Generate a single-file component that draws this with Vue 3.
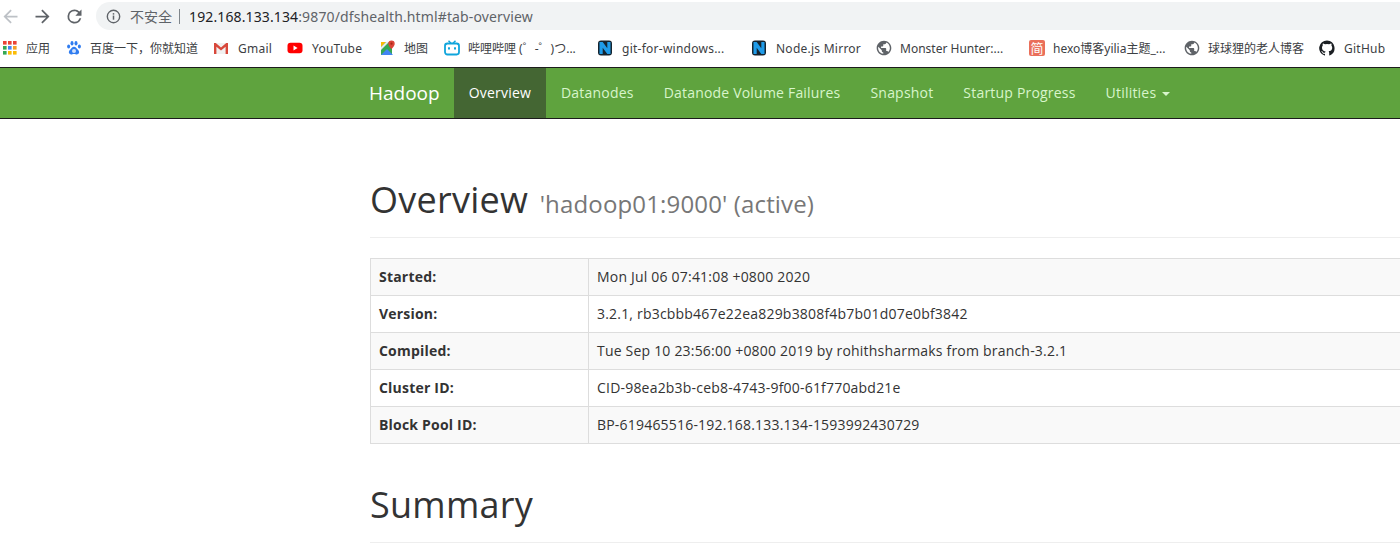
<template>
  <div class="page">
    <div class="toolbar">
      <svg class="nav-btn" viewBox="0 0 24 24"><path d="M20 11H7.8l5.6-5.6L12 4l-8 8 8 8 1.4-1.4L7.8 13H20z" fill="#bdc1c6" /></svg>
      <svg class="nav-btn" viewBox="0 0 24 24"><path d="M4 11h12.2l-5.6-5.6L12 4l8 8-8 8-1.4-1.4 5.6-5.6H4z" fill="#5f6368" /></svg>
      <svg class="nav-btn" viewBox="0 0 24 24"><path d="M17.65 6.35A7.96 7.96 0 0 0 12 4a8 8 0 1 0 7.73 10h-2.08A6 6 0 1 1 12 6c1.66 0 3.14.69 4.22 1.78L13 11h7V4z" fill="#5f6368" /></svg>
      <div class="omnibox">
        <svg class="info" viewBox="0 0 16 16">
          <circle cx="8" cy="8" r="6.6" fill="none" stroke="#5f6368" stroke-width="1.5" />
          <rect x="7.2" y="7" width="1.6" height="4.4" fill="#5f6368" />
          <rect x="7.2" y="4.4" width="1.6" height="1.6" fill="#5f6368" />
        </svg>
        <span class="insecure">不安全</span>
        <span class="divider"></span>
        <span class="url"><span class="host">192.168.133.134</span>:9870/dfshealth.html#tab-overview</span>
      </div>
    </div>

    <div class="bookmarks">
      <div v-for="b in bookmarks" :key="b.label" :class="['bookmark', { latin: b.latin }]">
        <svg class="bm-icon" viewBox="0 0 16 16">
          <template v-if="b.icon === 'apps'">
            <rect v-for="d in appDots" :key="d.x + '-' + d.y" :x="d.x" :y="d.y" width="3.6" height="3.6" :fill="d.c" />
          </template>
          <template v-else-if="b.icon === 'baidu'">
            <path d="M8 6.800c-1.800 0-2.600 1.800-3.900 3-1.100 1.100-1.500 2.200-1.100 3.300.4 1.100 1.600 1.500 2.800 1.300 1-.2 1.500-.4 2.200-.4s1.200.2 2.200.4c1.200.2 2.400-.2 2.800-1.300.4-1.100 0-2.200-1.100-3.300C10.600 8.600 9.800 6.800 8 6.800z" fill="#2f7cf0" />
            <ellipse cx="6" cy="3.200" rx="1.500" ry="2.200" fill="#2f7cf0" />
            <ellipse cx="10" cy="3.200" rx="1.500" ry="2.200" fill="#2f7cf0" />
            <ellipse cx="2.600" cy="6.600" rx="1.500" ry="2" fill="#2f7cf0" />
            <ellipse cx="13.400" cy="6.600" rx="1.500" ry="2" fill="#2f7cf0" />
            <circle cx="8" cy="11" r="2" fill="#cfe0fb" />
          </template>
          <template v-else-if="b.icon === 'gmail'">
            <path d="M1 3h14v11H1z" fill="#f1f1f1" />
            <path d="M1 14V3h1.800L8 7.600 13.200 3H15v11h-2.400V6.700L8 10.600 3.400 6.700V14z" fill="#d8483b" />
          </template>
          <template v-else-if="b.icon === 'youtube'">
            <rect x="0.500" y="2.800" width="15" height="10.400" rx="3" fill="#f00" />
            <path d="M6.500 5.600v4.800L10.600 8z" fill="#fff" />
          </template>
          <template v-else-if="b.icon === 'maps'">
            <path d="M1 2h11v13H1z" fill="#35a853" />
            <path d="M1 2h5L1 7z" fill="#fbbc05" />
            <path d="M1 15l6-6 6 6z" fill="#4285f4" />
            <path d="M1 7l5-5h3L1 10z" fill="#e8eaed" />
            <path d="M11.500 0.500a3.200 3.200 0 0 0-3.200 3.200c0 2.300 3.200 5.300 3.200 5.300s3.200-3 3.200-5.300a3.200 3.200 0 0 0-3.200-3.200z" fill="#db4437" />
            <circle cx="11.500" cy="3.700" r="1.100" fill="#a52714" />
          </template>
          <template v-else-if="b.icon === 'bili'">
            <path d="M4.500 0.800L7 3.200M11.500 0.800L9 3.200" stroke="#10a5dc" stroke-width="1.500" fill="none" />
            <rect x="1" y="3.500" width="14" height="11" rx="2.400" fill="none" stroke="#10a5dc" stroke-width="1.800" />
            <rect x="4" y="7.300" width="2" height="2.200" fill="#10a5dc" />
            <rect x="10" y="7.300" width="2" height="2.200" fill="#10a5dc" />
          </template>
          <template v-else-if="b.icon === 'node'">
            <rect x="1" y="0.500" width="14" height="15" rx="3" fill="#16242f" />
            <path d="M2.500 14V2h3.200l4.600 6.200V2h3.200v12h-3.200L5.700 7.800V14z" fill="#1f9be8" />
          </template>
          <template v-else-if="b.icon === 'globe'">
            <path transform="translate(-0.800 -0.800) scale(0.733)" d="M12 2C6.480 2 2 6.480 2 12s4.480 10 10 10 10-4.480 10-10S17.520 2 12 2zm-1 17.930c-3.950-.49-7-3.850-7-7.930 0-.62.08-1.210.21-1.790L9 15v1c0 1.100.9 2 2 2v1.930zm6.900-2.540c-.26-.81-1-1.390-1.900-1.390h-1v-3c0-.55-.45-1-1-1H8v-2h2c.55 0 1-.45 1-1V7h2c1.100 0 2-.9 2-2v-.41c2.930 1.190 5 4.060 5 7.410 0 2.080-.8 3.970-2.100 5.390z" fill="#5f6368" />
          </template>
          <template v-else-if="b.icon === 'jian'">
            <rect width="16" height="16" rx="2" fill="#ea6f5a" />
            <text x="8" y="13" text-anchor="middle" font-size="13" fill="#fff">简</text>
          </template>
          <template v-else>
            <path d="M8 .4a7.800 7.800 0 0 0-2.500 15.200c.4.100.5-.2.500-.4v-1.400c-2.200.5-2.600-1-2.600-1-.4-.9-.9-1.200-.9-1.200-.7-.5.100-.5.100-.5.800.100 1.200.8 1.200.8.700 1.200 1.900.9 2.300.7.100-.5.300-.9.500-1.100-1.700-.2-3.600-.9-3.600-3.900 0-.8.300-1.500.8-2.100-.1-.2-.4-1 .1-2.100 0 0 .7-.2 2.200.8a7.500 7.500 0 0 1 4 0c1.500-1 2.200-.8 2.200-.8.500 1.100.2 1.900.1 2.100.5.600.8 1.300.8 2.100 0 3-1.900 3.700-3.600 3.900.3.200.6.700.6 1.400v2.100c0 .2.100.5.500.4A7.800 7.800 0 0 0 8 .4z" fill="#1b1f23" />
          </template>
        </svg>
        <span class="bm-label">{{ b.label }}</span>
      </div>
    </div>

    <nav class="navbar">
      <a class="brand">Hadoop</a>
      <a v-for="item in navItems" :key="item" :class="['nav-item', { active: item === 'Overview' }]">{{ item }}</a>
      <a class="nav-item">Utilities <span class="caret"></span></a>
    </nav>

    <main class="content">
      <div class="page-header overview-header">
        <h1>Overview <small>'hadoop01:9000' (active)</small></h1>
      </div>
      <table class="info-table">
        <tbody>
          <tr v-for="row in rows" :key="row[0]">
            <th>{{ row[0] }}</th>
            <td>{{ row[1] }}</td>
          </tr>
        </tbody>
      </table>
      <div class="page-header summary-header">
        <h1>Summary</h1>
      </div>
    </main>
  </div>
</template>

<script setup>
const colors = ['#ea4335', '#ea4335', '#ea4335', '#34a853', '#4285f4', '#f4a025', '#34a853', '#fbbc05', '#fbbc05']
const appDots = colors.map((c, i) => ({ x: 1 + (i % 3) * 5, y: 1 + Math.floor(i / 3) * 5, c }))

const bookmarks = [
  { icon: 'apps', label: '应用' },
  { icon: 'baidu', label: '百度一下，你就知道' },
  { icon: 'gmail', label: 'Gmail', latin: true },
  { icon: 'youtube', label: 'YouTube', latin: true },
  { icon: 'maps', label: '地图' },
  { icon: 'bili', label: '哔哩哔哩 (゜-゜)つ...' },
  { icon: 'node', label: 'git-for-windows...', latin: true },
  { icon: 'node', label: 'Node.js Mirror', latin: true },
  { icon: 'globe', label: 'Monster Hunter:...' },
  { icon: 'jian', label: 'hexo博客yilia主题_...' },
  { icon: 'globe', label: '球球狸的老人博客' },
  { icon: 'github', label: 'GitHub', latin: true }
]

const navItems = ['Overview', 'Datanodes', 'Datanode Volume Failures', 'Snapshot', 'Startup Progress']

const rows = [
  ['Started:', 'Mon Jul 06 07:41:08 +0800 2020'],
  ['Version:', '3.2.1, rb3cbbb467e22ea829b3808f4b7b01d07e0bf3842'],
  ['Compiled:', 'Tue Sep 10 23:56:00 +0800 2019 by rohithsharmaks from branch-3.2.1'],
  ['Cluster ID:', 'CID-98ea2b3b-ceb8-4743-9f00-61f770abd21e'],
  ['Block Pool ID:', 'BP-619465516-192.168.133.134-1593992430729']
]
</script>

<style>
html, body {
  margin: 0;
  background: #fff;
  overflow: hidden;
}
</style>

<style scoped>
.page {
  width: 1400px;
  height: 555px;
  overflow: hidden;
  font-family: "Open Sans", "Noto Sans CJK SC", sans-serif;
  color: #333;
}

.toolbar {
  height: 34px;
  display: flex;
  align-items: center;
  padding-bottom: 2px;
  box-sizing: border-box;
}

.nav-btn {
  width: 21px;
  height: 21px;
  margin-right: 11px;
  flex: none;
}

.omnibox {
  flex: 1;
  height: 28px;
  background: #f1f3f4;
  border-radius: 14px 0 0 14px;
  display: flex;
  align-items: center;
  padding-left: 10px;
  font-family: "Noto Sans", "Noto Sans CJK SC", sans-serif;
  font-size: 14px;
}

.info {
  width: 15px;
  height: 15px;
  margin-right: 9px;
}

.insecure {
  font-size: 14px;
  color: #5f6368;
}

.divider {
  width: 1px;
  height: 15px;
  background: #80868b;
  margin: 0 9px 0 7px;
}

.url {
  color: #5f6368;
  font-size: 14px;
  letter-spacing: 0.125px;
}

.host {
  color: #202124;
}

.bookmarks {
  height: 33px;
  box-sizing: border-box;
  padding: 0 0 5px 2px;
  display: grid;
  grid-template-columns: 64px 147px 74px 93px 64px 153px 154px 125px 153px 155px 135px 80px;
  align-items: center;
  font-family: "Noto Sans", "Noto Sans CJK SC", sans-serif;
  font-size: 12px;
  color: #3c4043;
}

.bookmark {
  display: flex;
  align-items: center;
  gap: 8px;
  white-space: nowrap;
}

.bookmark.latin {
  gap: 9px;
  letter-spacing: 0.25px;
}

.bm-icon {
  width: 16px;
  height: 16px;
  flex: none;
}

.navbar {
  height: 50px;
  display: flex;
  padding-left: 354px;
  background: #5fa33e;
  border-top: 1px solid #1c1c1c;
  border-bottom: 1px solid #1c1c1c;
  font-size: 14px;
  line-height: 20px;
  letter-spacing: 0.2px;
}

.brand {
  padding: 15px 14px 15px 15px;
  font-size: 19px;
  letter-spacing: 0;
  color: #fff;
}

.nav-item {
  padding: 15px;
  color: #d8f5cb;
}

.nav-item.active {
  background: #446633;
  color: #fff;
}

.caret {
  display: inline-block;
  width: 0;
  height: 0;
  margin-left: 2px;
  vertical-align: middle;
  border-top: 4px solid;
  border-left: 4px solid transparent;
  border-right: 4px solid transparent;
}

.content {
  padding-left: 370px;
  width: 1140px;
  font-size: 14px;
}

.page-header {
  border-bottom: 1px solid #eee;
}

.overview-header {
  padding: 59px 0 11px;
  margin-bottom: 20px;
}

.summary-header {
  padding: 39px 0 15px;
}

h1 {
  margin: 0;
  font-size: 36px;
  font-weight: 400;
  line-height: 44px;
  letter-spacing: 0.25px;
  color: #333;
}

small {
  margin-left: 2px;
  font-size: 24px;
  letter-spacing: 0.15px;
  color: #777;
}

.info-table {
  width: 1110px;
  border-collapse: collapse;
  letter-spacing: 0.2px;
}

.info-table th,
.info-table td {
  height: 36px;
  padding: 0 8px;
  border: 1px solid #ddd;
  text-align: left;
  line-height: 20px;
}

.info-table th {
  width: 201px;
  font-weight: 700;
}

.info-table tr:nth-child(odd) {
  background: #f9f9f9;
}
</style>
